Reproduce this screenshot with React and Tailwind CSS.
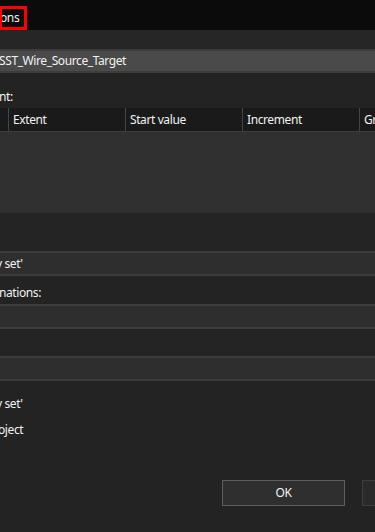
export default function App() {
  const font = { fontFamily: '"Noto Sans", "Open Sans", sans-serif' };
  return (
    <div className="w-[375px] h-[532px] overflow-hidden bg-[#232323] text-[12px] tracking-[-0.4px] text-[#f2f2f2]" style={font}>
      {/* title bar */}
      <div className="h-[30px] bg-[#0b0b0b] pt-[6px]">
        <div className="-ml-[1px] w-[28px] h-[24px] border-[3px] border-[#ff0000] bg-[#0b0b0b] flex items-center overflow-hidden">
          <span className="-ml-[2px] leading-[16px] whitespace-nowrap">ons</span>
        </div>
      </div>
      {/* band */}
      <div className="h-[19px] bg-[#262626]" />
      {/* name input */}
      <div className="h-[24px] border-y-2 border-[#3c3c3c] bg-[#4a4a4a] flex items-center overflow-hidden">
        <span className="-ml-[1px] leading-[16px] whitespace-nowrap">SST_Wire_Source_Target</span>
      </div>
      {/* label */}
      <div className="h-[35px] pt-[16px] leading-[16px] overflow-hidden whitespace-nowrap">
        <span className="-ml-[1px]">nt:</span>
      </div>
      {/* table */}
      <div className="h-[23px] bg-[#1a1a1a] flex overflow-hidden whitespace-nowrap">
        <div className="w-[8px] shrink-0" />
        {["Extent", "Start value", "Increment", "Gr"].map((t) => (
          <div key={t} className="w-[117px] shrink-0 border-l border-[#454545] pl-[4px] flex items-center leading-[16px]">
            {t}
          </div>
        ))}
      </div>
      <div className="h-px bg-[#3d3d3d]" />
      <div className="h-[81px] bg-[#303030]" />
      <div className="h-[38px] bg-[#242424]" />
      {/* input */}
      <div className="h-[25px] border-y-2 border-[#3c3c3c] bg-[#2e2e2e] flex items-center overflow-hidden whitespace-nowrap">
        <span className="-ml-[4px] leading-[16px]">y set'</span>
      </div>
      <div className="h-[28px] pt-[9px] leading-[16px] overflow-hidden whitespace-nowrap">
        <span className="-ml-[1px]">nations:</span>
      </div>
      <div className="h-[25px] border-y-2 border-[#3c3c3c] bg-[#2e2e2e]" />
      <div className="h-[27px] bg-[#242424]" />
      <div className="h-[25px] border-y-2 border-[#3c3c3c] bg-[#2e2e2e]" />
      <div className="pt-[15px] leading-[16px] overflow-hidden whitespace-nowrap">
        <span className="-ml-[4px] inline-block">y set'</span>
      </div>
      <div className="pt-[10px] leading-[16px] overflow-hidden whitespace-nowrap">
        <span className="-ml-[2px] inline-block">oject</span>
      </div>
      {/* buttons */}
      <div className="mt-[42px] flex overflow-hidden">
        <div className="ml-[222px] w-[123px] h-[26px] shrink-0 border border-[#5e5e5e] bg-[#2f2f2f] flex items-center justify-center leading-[16px]">
          OK
        </div>
        <div className="ml-[17px] w-[123px] h-[26px] shrink-0 border border-[#3e3e3e] bg-[#2a2a2a]" />
      </div>
    </div>
  );
}
